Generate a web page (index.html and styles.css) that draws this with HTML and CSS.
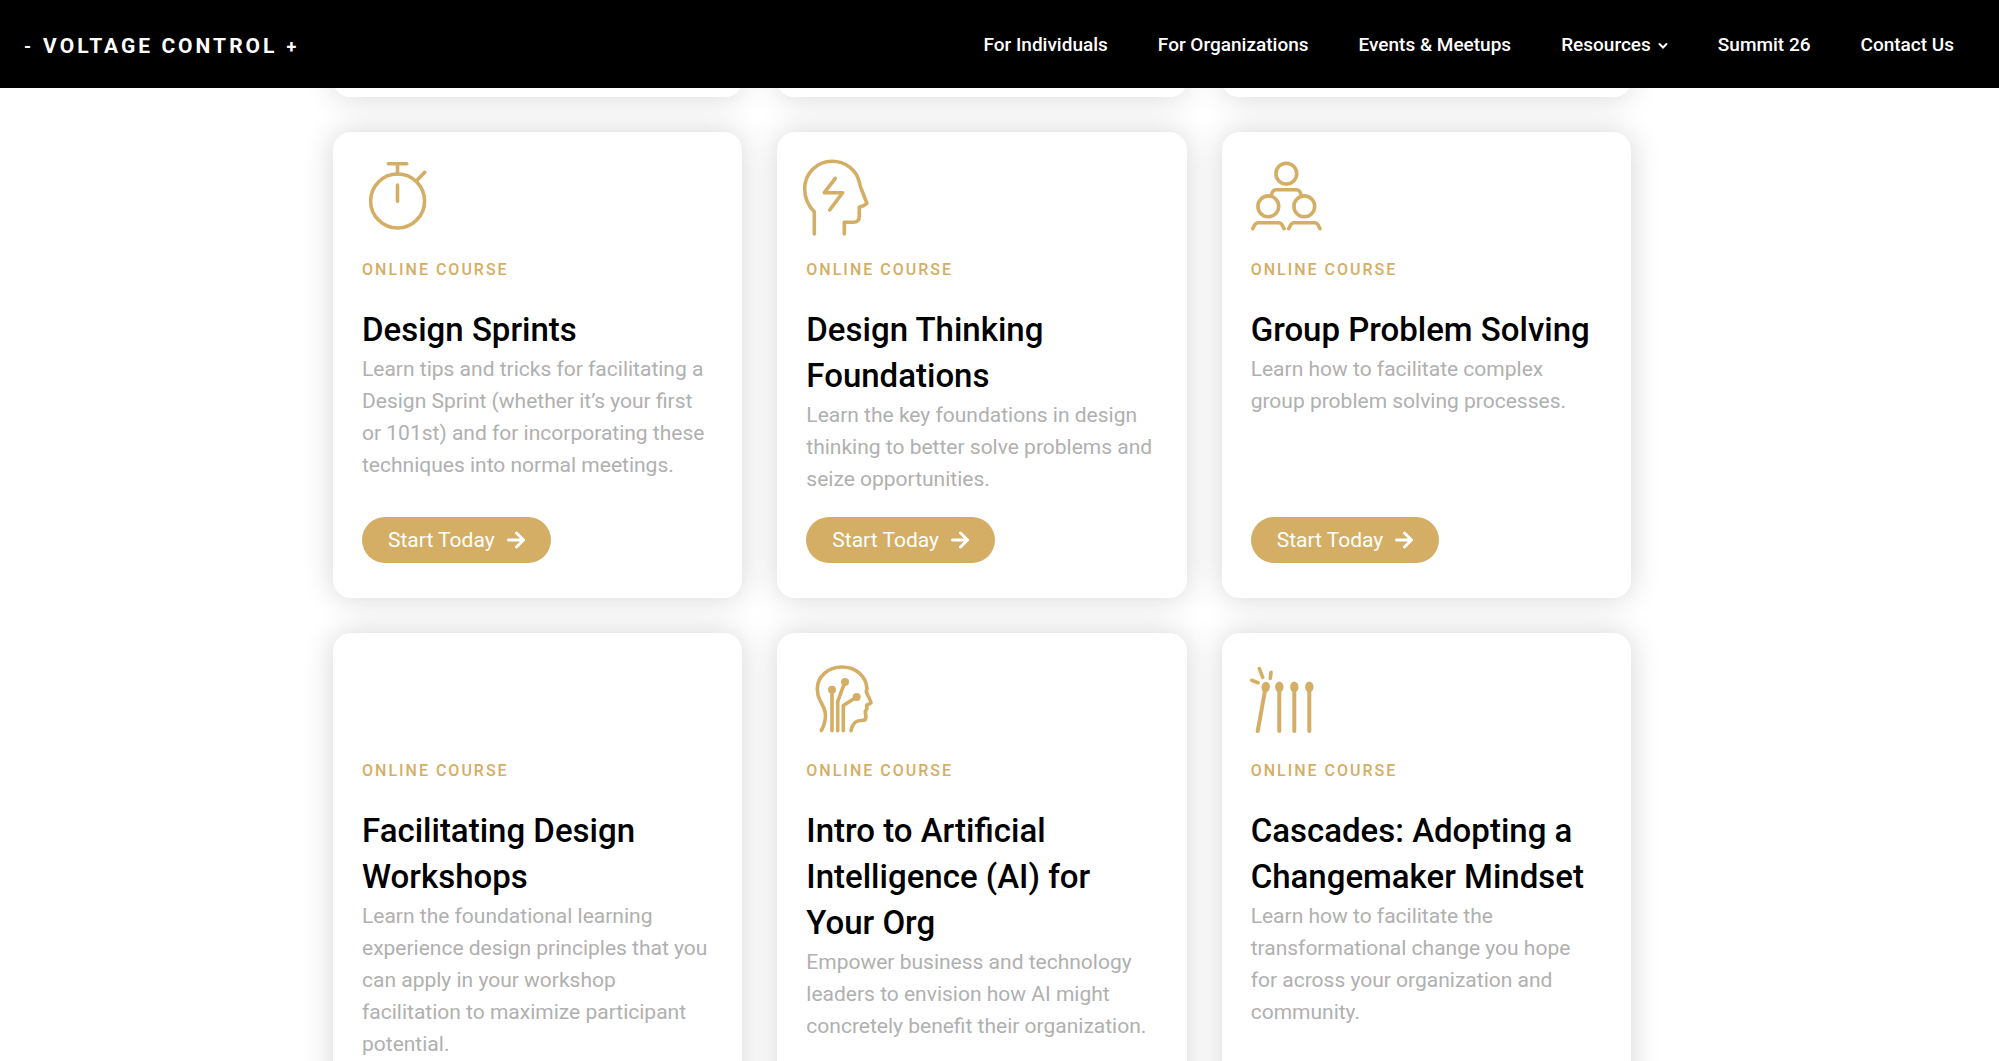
FILE: index.html
```html
<!DOCTYPE html>
<html lang="en">
<head>
  <meta charset="UTF-8">
  <title>Online Courses - Voltage Control</title>
  <link rel="stylesheet" href="styles.css">
</head>
<body>

<header class="site-header">
  <a class="logo" href="#"><span class="logo-sign">-</span><span>VOLTAGE CONTROL</span><span class="logo-sign">+</span></a>
  <nav class="main-nav">
    <a href="#">For Individuals</a>
    <a href="#">For Organizations</a>
    <a href="#">Events &amp; Meetups</a>
    <a href="#">Resources
      <svg class="chevron" viewBox="0 0 10 8" aria-hidden="true"><path d="M1.5 2 L5 5.5 L8.5 2"/></svg>
    </a>
    <a href="#">Summit 26</a>
    <a href="#">Contact Us</a>
  </nav>
</header>

<main class="courses">
  <div class="course-grid">
    <!-- end of the previous row, scrolled under the header -->
    <div class="card card-end"></div>
    <div class="card card-end"></div>
    <div class="card card-end"></div>

    <article class="card">
      <div class="icon">
        <svg viewBox="0 0 84 84" aria-hidden="true">
          <circle cx="42.6" cy="47" r="27"/>
          <path d="M33.3 9.7 H51.8 M42.5 10 V20 M42.5 31 V47.3 M61.3 27 L69.7 18.3"/>
        </svg>
      </div>
      <p class="label">Online Course</p>
      <h3>Design Sprints</h3>
      <p class="text">Learn tips and tricks for facilitating a Design Sprint (whether it’s your first or 101st) and for incorporating these techniques into normal meetings.</p>
      <a class="btn" href="#">Start Today
        <svg viewBox="0 0 18 18" aria-hidden="true"><path d="M1.5 9 H16 M9.5 2 L16.5 9 L9.5 16"/></svg>
      </a>
    </article>

    <article class="card">
      <div class="icon">
        <svg viewBox="0 0 84 84" aria-hidden="true">
          <path d="M15.3 80 V57.7 C9.5 52 5.7 44 5.7 34.7 C5.7 19.5 18 7.3 33 7.3 C46.5 7.3 57.5 16 60.3 28 C61 31.5 61.5 33.3 62.5 35.5 L68 49.3 C65.5 51.8 63 52.3 60.3 53.3 V62 Q60.3 68.3 54.5 68.3 H45.3 V80"/>
          <path d="M36.3 24.3 L25.3 38.7 H43.7 L30.7 56"/>
        </svg>
      </div>
      <p class="label">Online Course</p>
      <h3>Design Thinking Foundations</h3>
      <p class="text">Learn the key foundations in design thinking to better solve problems and seize opportunities.</p>
      <a class="btn" href="#">Start Today
        <svg viewBox="0 0 18 18" aria-hidden="true"><path d="M1.5 9 H16 M9.5 2 L16.5 9 L9.5 16"/></svg>
      </a>
    </article>

    <article class="card">
      <div class="icon">
        <svg viewBox="0 0 84 84" aria-hidden="true">
          <circle cx="42.3" cy="19.7" r="10.4"/>
          <circle cx="24.3" cy="52.3" r="10.4"/>
          <circle cx="60.3" cy="52.3" r="10.4"/>
          <path d="M27.3 41.3 Q28.5 35.7 32.3 35.7 H52.3 Q56 35.7 57.3 41.3"/>
          <path d="M8.7 74.7 L10.6 71 Q12 68.7 14 68.7 H34.7 Q36.7 68.7 38.2 71 L40 74.7"/>
          <path d="M44.7 74.7 L46.6 71 Q48 68.7 50 68.7 H70.7 Q72.7 68.7 74.2 71 L76 74.7"/>
        </svg>
      </div>
      <p class="label">Online Course</p>
      <h3>Group Problem Solving</h3>
      <p class="text">Learn how to facilitate complex group problem solving processes.</p>
      <a class="btn" href="#">Start Today
        <svg viewBox="0 0 18 18" aria-hidden="true"><path d="M1.5 9 H16 M9.5 2 L16.5 9 L9.5 16"/></svg>
      </a>
    </article>

    <article class="card">
      <div class="icon"></div>
      <p class="label">Online Course</p>
      <h3>Facilitating Design Workshops</h3>
      <p class="text">Learn the foundational learning experience design principles that you can apply in your workshop facilitation to maximize participant potential.</p>
    </article>

    <article class="card">
      <div class="icon">
        <svg viewBox="0 0 84 84" aria-hidden="true">
          <path d="M22.3 75.5 C26 69 27 64 26.3 58 C25.6 53 23.5 50 21.3 46 C19.2 42 18.3 38 18.3 34 C18.3 21.5 29 12 43 12 C57 12 67 21 68 33.3 L67.3 36.7 C68.5 40.5 71 43.5 72 47.7 C71 49.5 69 49.3 67.7 50 L67.9 53.5 L66.3 56.5 L66.9 62 Q67 65 64 65.3 C61 65.6 59.5 65.5 57.5 66.5 C54 68.3 53 71.5 52 75.7"/>
          <path d="M33 34.7 V75.7 M46 26.7 L38.7 46.7 V75.7 M57.7 42 L44.3 50.5 V75.7"/>
          <g class="solid">
            <circle cx="33" cy="34.7" r="4"/>
            <circle cx="46" cy="26.9" r="4"/>
            <circle cx="57.7" cy="42" r="4"/>
          </g>
        </svg>
      </div>
      <p class="label">Online Course</p>
      <h3>Intro to Artificial Intelligence (AI) for Your Org</h3>
      <p class="text">Empower business and technology leaders to envision how AI might concretely benefit their organization.</p>
    </article>

    <article class="card">
      <div class="icon">
        <svg viewBox="0 0 84 84" aria-hidden="true">
          <path d="M7.7 25.3 L14 27.7 M15.3 13.7 L18.7 22.3 M27 17.3 L26.3 23.3"/>
          <path class="stick" d="M21.7 32 L13.7 76 M35.3 32 V76 M50.3 32 V76 M65.3 32 V76"/>
          <g class="solid">
            <ellipse cx="21.7" cy="32.2" rx="4.2" ry="5.4" transform="rotate(12 21.7 32.2)"/>
            <ellipse cx="35.3" cy="32" rx="4.2" ry="5.4"/>
            <ellipse cx="50.3" cy="32" rx="4.2" ry="5.4"/>
            <ellipse cx="65.3" cy="32" rx="4.2" ry="5.4"/>
          </g>
        </svg>
      </div>
      <p class="label">Online Course</p>
      <h3>Cascades: Adopting a Changemaker Mindset</h3>
      <p class="text">Learn how to facilitate the transformational change you hope for across your organization and community.</p>
    </article>
  </div>
</main>

</body>
</html>
```

FILE: styles.css
```css
* {
  box-sizing: border-box;
}

body {
  margin: 0;
  height: 100vh;
  display: flex;
  flex-direction: column;
  overflow: hidden;
  background: #fff;
  font-family: Roboto, sans-serif;
  font-size: 21px;
}

a {
  text-decoration: none;
}

/* Header */
.site-header {
  display: flex;
  flex-shrink: 0;
  align-items: center;
  justify-content: space-between;
  height: 88px;
  padding: 0 45px 0 24px;
  background: #000;
}

.logo {
  display: flex;
  align-items: center;
  gap: 9px;
  padding-top: 4px;
  color: #fff;
  font-size: 21px;
  font-weight: 700;
  letter-spacing: 3px;
}

.logo-sign {
  font-size: 18px;
}

.main-nav {
  display: flex;
  gap: 50px;
}

.main-nav a {
  display: flex;
  align-items: center;
  gap: 7px;
  color: #fff;
  font-size: 19px;
  font-weight: 500;
}

.chevron {
  width: 10px;
  height: 8px;
  margin-top: 4px;
  fill: none;
  stroke: #fff;
  stroke-width: 2;
  stroke-linecap: round;
}

/* Courses */
.courses {
  flex: 1;
  overflow: hidden;
  padding-right: 35px;
}

.course-grid {
  display: grid;
  grid-template-columns: repeat(3, 1fr);
  gap: 35px;
  max-width: 1298px;
  margin: -24px auto 0;
}

.card {
  display: flex;
  flex-direction: column;
  align-items: flex-start;
  padding: 22px 30px 35px 29px;
  background: #fff;
  border-radius: 18px;
  box-shadow: 0 0 30px rgba(0, 0, 0, 0.17);
}

.card-end {
  height: 33px;
  padding: 0;
}

.icon {
  width: 84px;
  height: 84px;
  margin: 0 0 20px -7px;
}

.icon svg {
  display: block;
  width: 100%;
  fill: none;
  stroke: #d4ae65;
  stroke-width: 3.6;
  stroke-linecap: round;
  stroke-linejoin: round;
}

.icon .stick {
  stroke-width: 4;
}

.icon .solid {
  fill: #d4ae65;
  stroke: none;
}

.label {
  margin: 0 0 25px;
  color: #d4ae65;
  font-size: 16px;
  font-weight: 500;
  line-height: 24px;
  letter-spacing: 2px;
  text-transform: uppercase;
}

.card h3 {
  margin: 0;
  color: #000;
  font-size: 33px;
  font-weight: 500;
  line-height: 46px;
}

.text {
  margin: 0 0 22px;
  color: #b0b0b0;
  line-height: 32px;
}

.btn {
  display: flex;
  align-items: center;
  gap: 12px;
  height: 46px;
  margin-top: auto;
  padding: 0 26px;
  background: #d4ae65;
  border-radius: 23px;
  color: #fff;
}

.btn svg {
  width: 18px;
  height: 18px;
  fill: none;
  stroke: #fff;
  stroke-width: 3;
  stroke-linecap: round;
  stroke-linejoin: round;
}
```
